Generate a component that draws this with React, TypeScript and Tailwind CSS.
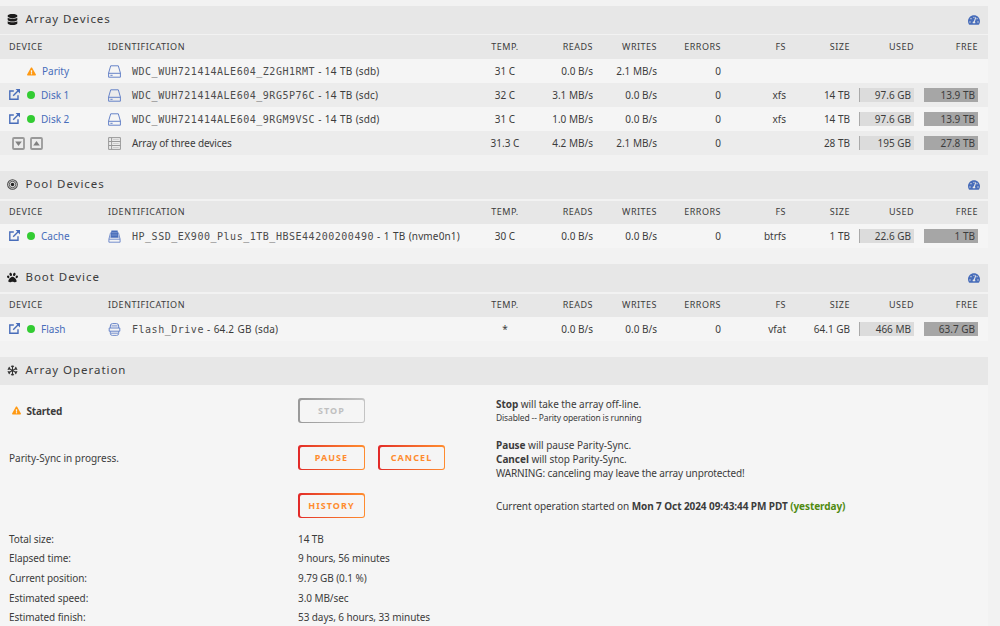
import type { ReactNode } from "react";
import { FaDatabase, FaExclamationTriangle, FaPaw, FaTachometerAlt } from "react-icons/fa";

interface Device {
  name?: string;
  status?: "ok" | "warn";
  icon: "disk" | "array" | "nvme" | "usb";
  serial?: string;
  info: string;
  temp: string;
  reads: string;
  writes: string;
  errors: string;
  fs?: string;
  size?: string;
  used?: string;
  free?: string;
}

const ARRAY: Device[] = [
  { name: "Parity", status: "warn", icon: "disk", serial: "WDC_WUH721414ALE604_Z2GH1RMT", info: "- 14 TB (sdb)", temp: "31 C", reads: "0.0 B/s", writes: "2.1 MB/s", errors: "0" },
  { name: "Disk 1", status: "ok", icon: "disk", serial: "WDC_WUH721414ALE604_9RG5P76C", info: "- 14 TB (sdc)", temp: "32 C", reads: "3.1 MB/s", writes: "0.0 B/s", errors: "0", fs: "xfs", size: "14 TB", used: "97.6 GB", free: "13.9 TB" },
  { name: "Disk 2", status: "ok", icon: "disk", serial: "WDC_WUH721414ALE604_9RGM9VSC", info: "- 14 TB (sdd)", temp: "31 C", reads: "1.0 MB/s", writes: "0.0 B/s", errors: "0", fs: "xfs", size: "14 TB", used: "97.6 GB", free: "13.9 TB" },
  { icon: "array", info: "Array of three devices", temp: "31.3 C", reads: "4.2 MB/s", writes: "2.1 MB/s", errors: "0", size: "28 TB", used: "195 GB", free: "27.8 TB" },
];

const POOL: Device[] = [
  { name: "Cache", status: "ok", icon: "nvme", serial: "HP_SSD_EX900_Plus_1TB_HBSE44200200490", info: "- 1 TB (nvme0n1)", temp: "30 C", reads: "0.0 B/s", writes: "0.0 B/s", errors: "0", fs: "btrfs", size: "1 TB", used: "22.6 GB", free: "1 TB" },
];

const BOOT: Device[] = [
  { name: "Flash", status: "ok", icon: "usb", serial: "Flash_Drive", info: "- 64.2 GB (sda)", temp: "*", reads: "0.0 B/s", writes: "0.0 B/s", errors: "0", fs: "vfat", size: "64.1 GB", used: "466 MB", free: "63.7 GB" },
];

const STATS = [
  ["Total size:", "14 TB"],
  ["Elapsed time:", "9 hours, 56 minutes"],
  ["Current position:", "9.79 GB (0.1 %)"],
  ["Estimated speed:", "3.0 MB/sec"],
  ["Estimated finish:", "53 days, 6 hours, 33 minutes"],
];

const COLS = "grid grid-cols-[108px_365px_64px_56px_64px_64px_65px_64px_64px_64px_10px] items-center";

function TargetIcon() {
  return (
    <svg viewBox="0 0 12 12" className="size-[11px]" fill="none" stroke="#444">
      <circle cx="6" cy="6" r="5.3" strokeWidth="1.1" />
      <circle cx="6" cy="6" r="3.5" strokeWidth="1" />
      <circle cx="6" cy="6" r="1.9" fill="#222" stroke="none" />
    </svg>
  );
}

function SnowIcon() {
  return (
    <svg viewBox="0 0 12 12" className="size-[11px]" fill="none" stroke="#333" strokeWidth="1.1">
      <path d="M6 .6v10.8M1.3 3.3l9.4 5.4M10.7 3.3L1.3 8.7" />
      <path d="M4.5 1L6 2.4 7.5 1M4.5 11L6 9.6 7.5 11M.8 5L2.8 4.2 2.4 2M11.2 7l-2 .8.4 2.2M11.2 5l-2-.8.4-2.2M.8 7l2 .8L2.4 10" />
    </svg>
  );
}

function DeviceIcon({ type }: { type: Device["icon"] }) {
  if (type === "array")
    return (
      <svg viewBox="0 0 13 13" className="size-[13px]" fill="none" stroke="#999">
        <path d="M.6.6h11.8v11.8H.6zM.6 4.5h11.8M.6 8.5h11.8M3.6.6v11.8" />
        <path d="M5 2.6h5.8M5 6.5h5.8M5 10.5h5.8" stroke="#c4c4c4" strokeWidth=".8" />
      </svg>
    );
  if (type === "nvme")
    return (
      <svg viewBox="0 0 13 13" className="size-[13px]" fill="none" stroke="#6683c8">
        <path d="M3.4.4h6.2l1 7.4H2.4z" fill="#486dba" stroke="none" />
        <path d="M2.6 2.5L.9 9.2h11.2l-1.7-6.7M.9 9.2v3h11.2v-3" strokeWidth=".9" />
        <path d="M3.8 2.7h5.4M3.6 5h5.8" stroke="#9fb2dd" strokeWidth=".6" />
      </svg>
    );
  if (type === "usb")
    return (
      <svg viewBox="0 0 13 13" className="size-[13px]" fill="none" stroke="#6683c8">
        <path d="M2.3 5V3Q2.3.6 4.6.6h3.8q2.3 0 2.3 2.4v2M1.2 5h10.6v3.2H1.2z" />
        <path d="M2.3 8.2v2.2q0 2 2 2h4.4q2 0 2-2V8.2M2.5 10.2h8M3.4 2.9h6.2" strokeWidth=".9" />
      </svg>
    );
  return (
    <svg viewBox="0 0 13 13" className="size-[13px]" fill="none" stroke="#6683c8">
      <path d="M2.7.8h7.6l2.1 7.2v4.2H.6V8z" strokeLinejoin="round" />
      <path d="M.6 8.3h11.8M2.4 10.3h2.2" />
    </svg>
  );
}

function LinkIcon() {
  return (
    <svg viewBox="0 0 11 11" className="-mt-px size-[11px]" fill="none" stroke="#486dba" strokeWidth="1.4">
      <path d="M4.8 2H.8v8.2H9V6.2M4.2 6.8L9.4 1.6" />
      <path d="M6.6 0H11v4.4z" fill="#486dba" stroke="none" />
    </svg>
  );
}

function Arrow({ up }: { up?: boolean }) {
  return (
    <svg viewBox="0 0 13 13" className="size-[13px]" fill="none" stroke="#999" strokeWidth="1.8">
      <rect x="1" y="1" width="11" height="11" rx="1" />
      <path d={up ? "M3.2 8.5h6.6L6.5 4z" : "M3.2 4.5h6.6L6.5 9z"} fill="#808080" stroke="none" />
    </svg>
  );
}

function TitleBar({ icon, title, gauge }: { icon: ReactNode; title: string; gauge?: boolean }) {
  return (
    <div className="flex h-[28px] items-center bg-[#e7e7e7] pl-[7px] pr-2">
      <span className="-mt-px flex w-[18.5px] text-[#1c1b1b]">{icon}</span>
      <span className="-mt-[2px] text-[11.5px] tracking-[0.95px]">{title}</span>
      {gauge && <FaTachometerAlt className="ml-auto size-[12px] text-[#486dba]" />}
    </div>
  );
}

function Row({ d, alt }: { d: Device; alt: boolean }) {
  return (
    <div className={`${COLS} h-[24px] text-right ${alt ? "bg-[#ececec]" : "bg-[#f5f5f5]"}`}>
      <div className="flex items-center pl-[9px] text-[#486dba]">
        {d.name ? (
          <>
            <span className="w-[18px]">{d.status === "ok" && <LinkIcon />}</span>
            {d.status === "ok" ? (
              <span className="mr-[6px] size-[8px] rounded-full bg-[#33cc33]" />
            ) : (
              <FaExclamationTriangle className="mr-[6px] size-[9px] text-[#ff9912]" />
            )}
            {d.name}
          </>
        ) : (
          <span className="flex gap-[5px] pl-[3px]"><Arrow /><Arrow up /></span>
        )}
      </div>
      <div className="flex items-center whitespace-pre text-left">
        <span className="mr-[11px] mt-px"><DeviceIcon type={d.icon} /></span>
        {d.serial && <span className="font-['DejaVu_Sans_Mono',monospace] tracking-[0.52px] text-[#4c4c4c]">{d.serial}</span>}
        <span className={d.serial ? "ml-[3px] tracking-[0.15px] [word-spacing:0.6px]" : "tracking-[-0.1px]"}>{d.info}</span>
      </div>
      <div className="text-center">{d.temp}</div>
      <div>{d.reads}</div>
      <div>{d.writes}</div>
      <div>{d.errors}</div>
      <div>{d.fs}</div>
      <div>{d.size}</div>
      {d.used ? <div className="ml-[9px] h-[14px] border-l border-[#aaa] bg-[#dcdcdc] pr-[3px] leading-[14px]">{d.used}</div> : <div />}
      {d.free ? <div className="ml-[10px] h-[14px] bg-[#a6a6a6] pr-[3px] leading-[14px]">{d.free}</div> : <div />}
    </div>
  );
}

function Devices({ icon, title, rows, first }: { icon: ReactNode; title: string; rows: Device[]; first?: boolean }) {
  return (
    <section className="mb-[16px]">
      <TitleBar icon={icon} title={title} gauge />
      <div className={`${COLS} bg-[#e7e7e7] pb-px text-right text-[9px] tracking-[0.5px] ${first ? "mt-px h-[24px]" : "mt-[2px] h-[23px]"}`}>
        <div className="pl-[9px] text-left">DEVICE</div>
        <div className="text-left">IDENTIFICATION</div>
        <div className="text-center">TEMP.</div>
        <div>READS</div>
        <div>WRITES</div>
        <div>ERRORS</div>
        <div>FS</div>
        <div>SIZE</div>
        <div>USED</div>
        <div>FREE</div>
      </div>
      {rows.map((d, i) => <Row key={i} d={d} alt={i % 2 === 1} />)}
    </section>
  );
}

function Button({ children, disabled }: { children: string; disabled?: boolean }) {
  return (
    <button
      disabled={disabled}
      className={`h-[25px] w-[67px] rounded-[3px] bg-linear-to-r p-[1.5px] ${disabled ? "from-[#999] to-[#c4c4c4]" : "from-[#e22828] to-[#ff8c2f]"}`}
    >
      <span className={`flex h-full items-center justify-center rounded-[2px] bg-[#f5f5f5] text-[9px] font-bold tracking-[1.05px] ${disabled ? "text-[#c0c0c0]" : "text-[#ff8c2f]"}`}>
        {children}
      </span>
    </button>
  );
}

export default function App() {
  return (
    <div className="h-[626px] w-[1000px] overflow-hidden bg-[#f2f2f2] pt-[6px] font-['Noto_Sans',sans-serif] text-[10px] text-[#3c3c3c]">
      <main className="w-[988px]">
        <Devices first icon={<FaDatabase className="size-[11px]" />} title="Array Devices" rows={ARRAY} />
        <Devices icon={<TargetIcon />} title="Pool Devices" rows={POOL} />
        <Devices icon={<FaPaw className="size-[11px]" />} title="Boot Device" rows={BOOT} />
        <section>
          <TitleBar icon={<SnowIcon />} title="Array Operation" />
          <div className="h-[250px] bg-[#f5f5f5] leading-[14px] tracking-[-0.08px]">
            <div className="grid grid-cols-[298px_198px_1fr] pt-[12px]">
              <div className="flex h-[27px] items-center pl-[11.5px] font-bold tracking-[-0.2px]">
                <FaExclamationTriangle className="mr-[6px] size-[9px] text-[#ff9912]" />
                Started
              </div>
              <div className="pt-px"><Button disabled>STOP</Button></div>
              <div>
                <p className="tracking-[-0.05px]"><b>Stop</b> will take the array off-line.</p>
                <p className="text-[8.5px] tracking-[-0.15px]">Disabled -- Parity operation is running</p>
              </div>
            </div>
            <div className="mt-[13px] grid grid-cols-[298px_198px_1fr]">
              <div className="pl-[9px] pt-[13px] tracking-normal">Parity-Sync in progress.</div>
              <div className="flex gap-[13px] pt-[7px]"><Button>PAUSE</Button><Button>CANCEL</Button></div>
              <div className="tracking-[-0.03px]">
                <p><b>Pause</b> will pause Parity-Sync.</p>
                <p><b>Cancel</b> will stop Parity-Sync.</p>
                <p className="tracking-[-0.13px]">WARNING: canceling may leave the array unprotected!</p>
              </div>
            </div>
            <div className="mt-[13px] grid grid-cols-[298px_198px_1fr] items-center">
              <div />
              <Button>HISTORY</Button>
              <p>Current operation started on <b>Mon 7 Oct 2024 09:43:44 PM PDT <span className="text-[#4f8a10]">(yesterday)</span></b></p>
            </div>
            <dl className="mt-[11px]">
              {STATS.map(([label, value]) => (
                <div key={label} className="grid h-[19.6px] grid-cols-[298px_1fr] items-center">
                  <dt className="pl-[9px]">{label}</dt>
                  <dd>{value}</dd>
                </div>
              ))}
            </dl>
          </div>
        </section>
      </main>
    </div>
  );
}
